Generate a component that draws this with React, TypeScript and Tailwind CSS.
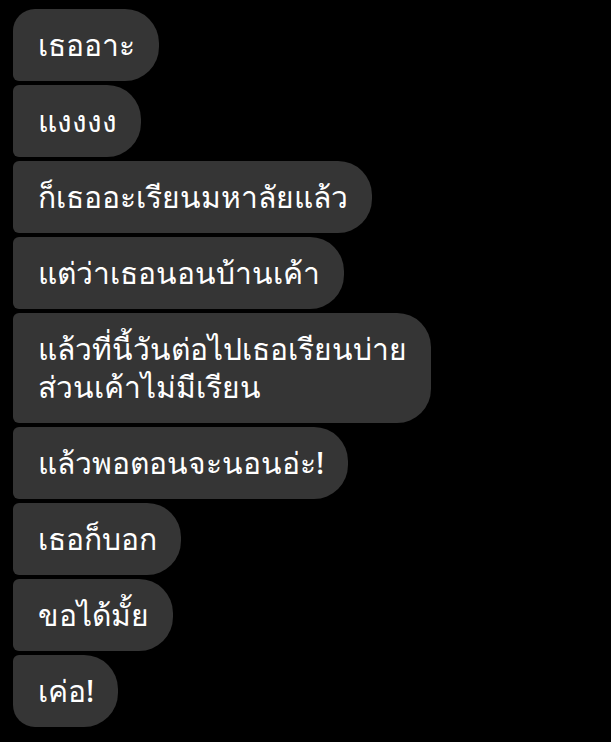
const messages = [
  "เธออาะ",
  "แงงงง",
  "ก็เธออะเรียนมหาลัยแล้ว",
  "แต่ว่าเธอนอนบ้านเค้า",
  "แล้วที่นี้วันต่อไปเธอเรียนบ่าย\nส่วนเค้าไม่มีเรียน",
  "แล้วพอตอนจะนอนอ่ะ!",
  "เธอก็บอก",
  "ขอได้มั้ย",
  "เค่อ!",
]

export default function App() {
  return (
    <div className="min-h-[742px] w-full bg-black pt-[9px] pl-[13px] font-['Noto_Sans',sans-serif]">
      <div className="flex flex-col items-start gap-1">
        {messages.map((text, i) => {
          const first = i === 0
          const last = i === messages.length - 1
          return (
            <div
              key={i}
              className={[
                "whitespace-pre-line bg-[#353535] pl-[25px] pr-6 py-[17px] text-[30px] font-medium leading-[38px] text-white rounded-r-[34px]",
                first ? "rounded-tl-[22px]" : "rounded-tl-[6px]",
                last ? "rounded-bl-[22px]" : "rounded-bl-[6px]",
              ].join(" ")}
            >
              {text}
            </div>
          )
        })}
      </div>
    </div>
  )
}
